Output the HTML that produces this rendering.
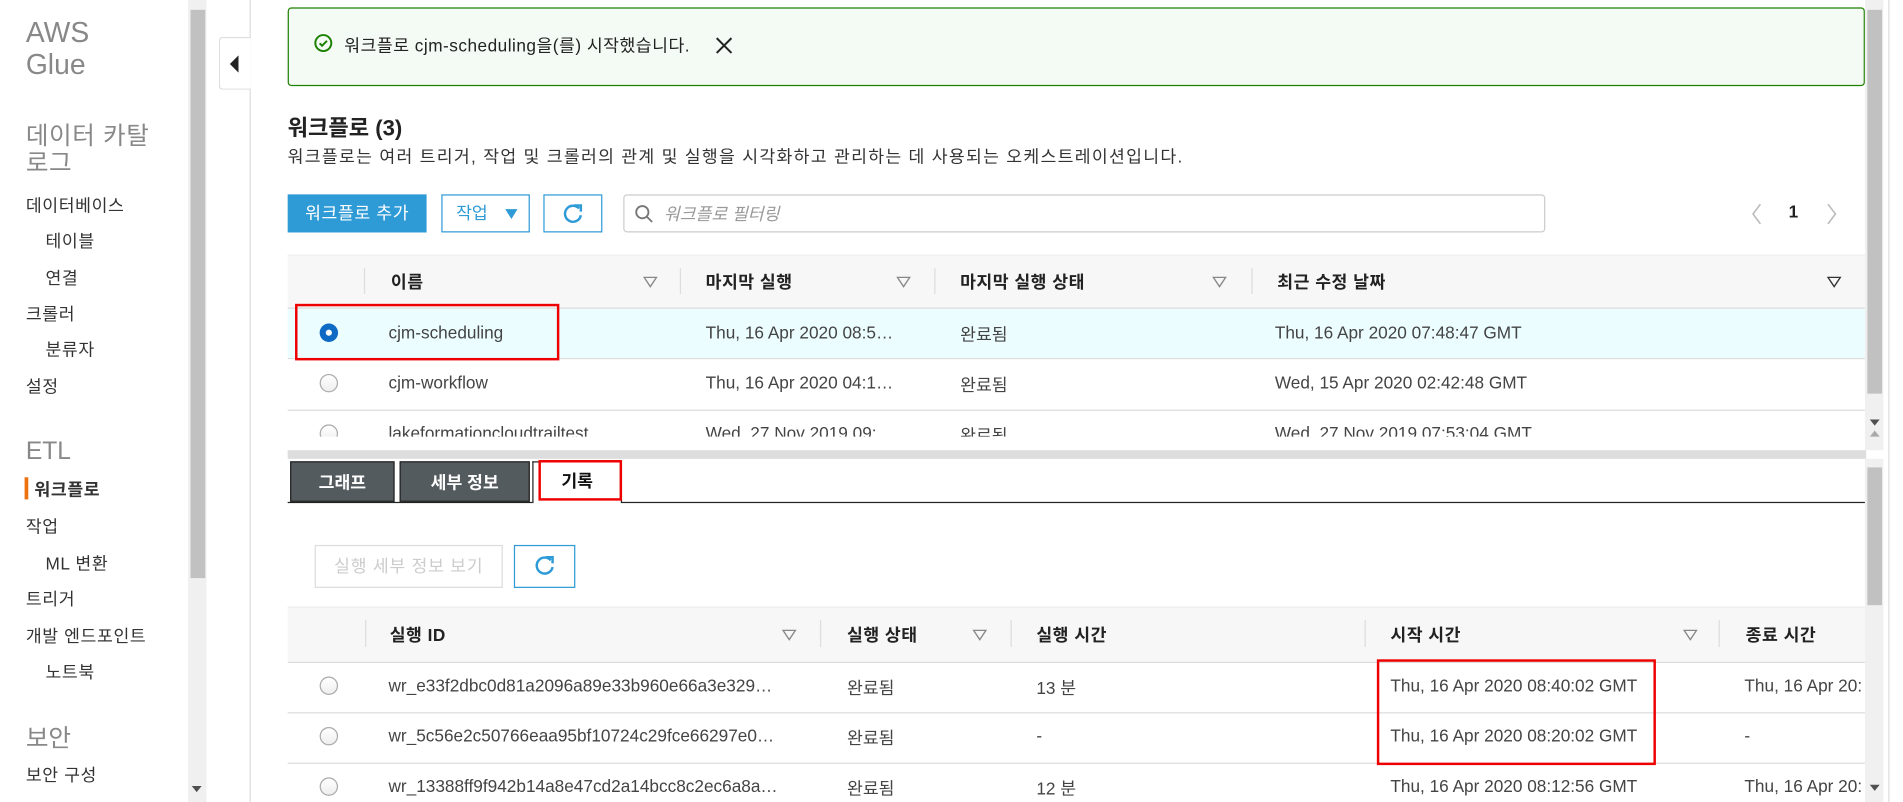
<!DOCTYPE html>
<html><head><meta charset="utf-8"><style>
*{box-sizing:border-box;margin:0;padding:0}
html,body{width:1903px;height:802px;overflow:hidden;background:#fff}
#w{position:absolute;left:0;top:0;width:1548px;height:652px;transform:scale(1.22933,1.23006);transform-origin:0 0;font-family:"Liberation Sans","Noto Sans CJK KR",sans-serif;color:#333}
.a{position:absolute;white-space:nowrap}
.nav{font-size:14px;color:#333;letter-spacing:0.5px}
.g{color:#888;font-size:20px}
.hd{font-size:14px;font-weight:bold;color:#222;letter-spacing:0.4px}
.td{font-size:14px;color:#444}
.tri{position:absolute;width:0;height:0;border-left:6px solid transparent;border-right:6px solid transparent;border-top:9px solid #888}
.tri:after{content:"";position:absolute;left:-4px;top:-8px;border-left:4px solid transparent;border-right:4px solid transparent;border-top:6px solid #f7f7f7}
.rad{position:absolute;width:15px;height:15px;border-radius:50%;border:1px solid #aaa;background:linear-gradient(#fff,#eee)}
.ln{position:absolute;height:1px;background:#ddd}
.sep{position:absolute;width:1px;background:#ddd}
</style></head><body><div id="w">
<div class="a" style="left:21px;top:13px;font-size:23px;line-height:26px;color:#888">AWS<br>Glue</div>
<div class="a g" style="left:21px;top:100px;line-height:22px;letter-spacing:0.5px">데이터 카탈<br>로그</div>
<div class="a nav" style="left:21px;top:157px">데이터베이스</div>
<div class="a nav" style="left:37px;top:186px">테이블</div>
<div class="a nav" style="left:37px;top:216px">연결</div>
<div class="a nav" style="left:21px;top:245px">크롤러</div>
<div class="a nav" style="left:37px;top:274px">분류자</div>
<div class="a nav" style="left:21px;top:304px">설정</div>
<div class="a g" style="left:21px;top:356px">ETL</div>
<div class="a" style="left:20px;top:388px;width:3px;height:18px;background:#ec7211"></div>
<div class="a nav" style="left:28px;top:388px;font-weight:bold">워크플로</div>
<div class="a nav" style="left:21px;top:418px">작업</div>
<div class="a nav" style="left:37px;top:448px">ML 변환</div>
<div class="a nav" style="left:21px;top:477px">트리거</div>
<div class="a nav" style="left:21px;top:507px">개발 엔드포인트</div>
<div class="a nav" style="left:37px;top:536px">노트북</div>
<div class="a g" style="left:21px;top:584px">보안</div>
<div class="a nav" style="left:21px;top:620px">보안 구성</div>
<div class="a" style="left:153px;top:0;width:15px;height:652px;background:#f0f0f0"></div>
<div class="a" style="left:155px;top:8px;width:12px;height:462px;background:#c1c1c1"></div>
<div class="a" style="left:156px;top:639px;border-left:4px solid transparent;border-right:4px solid transparent;border-top:5px solid #505050"></div>
<div class="a" style="left:203px;top:0;width:1px;height:652px;background:#ddd"></div>
<div class="a" style="left:178px;top:30px;width:26px;height:43px;border:1px solid #ddd;border-right:none;background:#fff;border-radius:3px 0 0 3px"></div>
<div class="a" style="left:187px;top:45px;border-top:7px solid transparent;border-bottom:7px solid transparent;border-right:7px solid #222"></div>
<div class="a" style="left:234px;top:6px;width:1283px;height:64px;border:1px solid #1d8102;border-radius:3px;background:#f4fbf4"></div>
<svg class="a" style="left:255px;top:27px" width="16" height="16" viewBox="0 0 16 16"><circle cx="8" cy="8" r="6.5" fill="none" stroke="#1d8102" stroke-width="1.6"/><path d="M5 8.2l2 2 4-4" fill="none" stroke="#1d8102" stroke-width="1.6"/></svg>
<div class="a" style="left:280px;top:27px;font-size:14px;color:#222;letter-spacing:0.4px">워크플로 cjm-scheduling을(를) 시작했습니다.</div>
<svg class="a" style="left:582px;top:30px" width="14" height="14" viewBox="0 0 14 14"><path d="M1 1l12 12M13 1L1 13" stroke="#222" stroke-width="1.6"/></svg>
<div class="a" style="left:234px;top:90px;font-size:18px;font-weight:bold;color:#222">워크플로 (3)</div>
<div class="a" style="left:234px;top:117px;font-size:14px;color:#333;letter-spacing:1.05px">워크플로는 여러 트리거, 작업 및 크롤러의 관계 및 실행을 시각화하고 관리하는 데 사용되는 오케스트레이션입니다.</div>
<div class="a" style="left:234px;top:158px;width:113px;height:31px;background:#2f9bd6;color:#fff;font-size:14px;line-height:31px;text-align:center;letter-spacing:0.5px">워크플로 추가</div>
<div class="a" style="left:359px;top:158px;width:72px;height:31px;border:1px solid #2f9bd6;color:#2f9bd6;font-size:14px;line-height:29px;padding-left:11px">작업</div>
<div class="a" style="left:411px;top:170px;border-left:5px solid transparent;border-right:5px solid transparent;border-top:8px solid #2f9bd6"></div>
<div class="a" style="left:442px;top:158px;width:48px;height:31px;border:1px solid #2f9bd6"></div>
<svg class="a" style="left:456px;top:164px" width="20" height="20" viewBox="0 0 20 20"><path d="M15 5.5A6.5 6.5 0 1 0 16.5 11" fill="none" stroke="#2f9bd6" stroke-width="2"/><path d="M11 3h5.5v5" fill="none" stroke="#2f9bd6" stroke-width="2"/></svg>
<div class="a" style="left:507px;top:158px;width:750px;height:31px;border:1px solid #ccc;border-radius:3px"></div>
<svg class="a" style="left:516px;top:166px" width="16" height="16" viewBox="0 0 16 16"><circle cx="6.5" cy="6.5" r="5" fill="none" stroke="#777" stroke-width="1.5"/><path d="M10 10l4.5 4.5" stroke="#777" stroke-width="1.5"/></svg>
<div class="a" style="left:540px;top:164px;font-size:14px;color:#999;font-style:italic">워크플로 필터링</div>
<svg class="a" style="left:1424px;top:165px" width="10" height="18"><path d="M8 1L2 9l6 8" fill="none" stroke="#bbb" stroke-width="1.3"/></svg>
<div class="a" style="left:1455px;top:164px;font-size:14px;font-weight:bold;color:#222">1</div>
<svg class="a" style="left:1485px;top:165px" width="10" height="18"><path d="M2 1l6 8-6 8" fill="none" stroke="#bbb" stroke-width="1.3"/></svg>
<div class="a" style="left:234px;top:207px;width:1283px;height:43px;background:#f7f7f7;border-top:1px solid #eee"></div>
<div class="sep" style="left:296px;top:218px;height:21px"></div>
<div class="sep" style="left:553px;top:218px;height:21px"></div>
<div class="sep" style="left:760px;top:218px;height:21px"></div>
<div class="sep" style="left:1018px;top:218px;height:21px"></div>
<div class="a hd" style="left:318px;top:219px">이름</div>
<div class="a hd" style="left:574px;top:219px">마지막 실행</div>
<div class="a hd" style="left:781px;top:219px">마지막 실행 상태</div>
<div class="a hd" style="left:1039px;top:219px">최근 수정 날짜</div>
<div class="tri" style="left:523px;top:225px"></div>
<div class="tri" style="left:729px;top:225px"></div>
<div class="tri" style="left:986px;top:225px"></div>
<div class="tri" style="left:1486px;top:225px;border-top-color:#333"></div>
<div class="a" style="left:234px;top:250px;width:1283px;height:41px;background:#ebfdff"></div>
<div class="ln" style="left:234px;top:250px;width:1283px"></div>
<div class="ln" style="left:234px;top:291px;width:1283px"></div>
<div class="ln" style="left:234px;top:333px;width:1283px"></div>
<div class="a" style="left:260px;top:263px;width:15px;height:15px;border-radius:50%;background:#0e6ac4"></div>
<div class="a" style="left:265px;top:268px;width:5px;height:5px;border-radius:50%;background:#fff"></div>
<div class="a td" style="left:316px;top:262px">cjm-scheduling</div>
<div class="a td" style="left:574px;top:262px">Thu, 16 Apr 2020 08:5…</div>
<div class="a td" style="left:781px;top:262px">완료됨</div>
<div class="a td" style="left:1037px;top:262px">Thu, 16 Apr 2020 07:48:47 GMT</div>
<div class="rad" style="left:260px;top:304px"></div>
<div class="a td" style="left:316px;top:303px">cjm-workflow</div>
<div class="a td" style="left:574px;top:303px">Thu, 16 Apr 2020 04:1…</div>
<div class="a td" style="left:781px;top:303px">완료됨</div>
<div class="a td" style="left:1037px;top:303px">Wed, 15 Apr 2020 02:42:48 GMT</div>
<div class="a" style="left:234px;top:334px;width:1283px;height:21px;overflow:hidden">
<div class="rad" style="left:26px;top:11px"></div>
<div class="a td" style="left:82px;top:10px">lakeformationcloudtrailtest</div>
<div class="a td" style="left:340px;top:10px">Wed, 27 Nov 2019 09:</div>
<div class="a td" style="left:547px;top:10px">완료됨</div>
<div class="a td" style="left:803px;top:10px">Wed, 27 Nov 2019 07:53:04 GMT</div></div>
<div class="a" style="left:240px;top:247px;width:215px;height:46px;border:2px solid #e00"></div>
<div class="a" style="left:1517px;top:0;width:15px;height:366px;background:#f0f0f0"></div>
<div class="a" style="left:1519px;top:8px;width:12px;height:312px;background:#c1c1c1"></div>
<div class="a" style="left:1521px;top:341px;border-left:4px solid transparent;border-right:4px solid transparent;border-top:5px solid #505050"></div>
<div class="a" style="left:1517px;top:373px;width:15px;height:279px;background:#f0f0f0"></div>
<div class="a" style="left:1521px;top:350px;border-left:4px solid transparent;border-right:4px solid transparent;border-bottom:5px solid #aaa"></div>
<div class="a" style="left:1519px;top:380px;width:12px;height:112px;background:#c1c1c1"></div>
<div class="a" style="left:1521px;top:638px;border-left:4px solid transparent;border-right:4px solid transparent;border-top:5px solid #505050"></div>
<div class="a" style="left:1536px;top:0;width:1px;height:652px;background:#ddd"></div>
<div class="a" style="left:234px;top:366px;width:1284px;height:7px;background:#ddd"></div>
<div class="a" style="left:236px;top:375px;width:85px;height:33px;background:#545b5e;color:#fff;font-size:14px;font-weight:bold;text-align:center;line-height:33px;border:1px solid #222">그래프</div>
<div class="a" style="left:325px;top:375px;width:106px;height:33px;background:#545b5e;color:#fff;font-size:14px;font-weight:bold;text-align:center;line-height:33px;border:1px solid #222">세부 정보</div>
<div class="a" style="left:433px;top:375px;width:73px;height:34px;background:#fff;color:#111;font-size:14px;font-weight:bold;text-align:center;line-height:31px;border:1px solid #222;border-bottom:none">기록</div>
<div class="a" style="left:234px;top:408px;width:199px;height:1px;background:#222"></div>
<div class="a" style="left:506px;top:408px;width:1011px;height:1px;background:#222"></div>
<div class="a" style="left:438px;top:374px;width:68px;height:33px;border:2px solid #e00"></div>
<div class="a" style="left:256px;top:443px;width:153px;height:35px;border:1px solid #ddd;color:#ccc;font-size:14px;line-height:33px;text-align:center;letter-spacing:0.6px">실행 세부 정보 보기</div>
<div class="a" style="left:418px;top:443px;width:50px;height:35px;border:1px solid #2f9bd6"></div>
<svg class="a" style="left:433px;top:450px" width="20" height="20" viewBox="0 0 20 20"><path d="M15 5.5A6.5 6.5 0 1 0 16.5 11" fill="none" stroke="#2f9bd6" stroke-width="2"/><path d="M11 3h5.5v5" fill="none" stroke="#2f9bd6" stroke-width="2"/></svg>
<div class="a" style="left:234px;top:493px;width:1283px;height:45px;background:#f7f7f7;border-top:1px solid #eee"></div>
<div class="sep" style="left:297px;top:504px;height:22px"></div>
<div class="sep" style="left:667px;top:504px;height:22px"></div>
<div class="sep" style="left:822px;top:504px;height:22px"></div>
<div class="sep" style="left:1110px;top:504px;height:22px"></div>
<div class="sep" style="left:1398px;top:504px;height:22px"></div>
<div class="a hd" style="left:317px;top:506px">실행 ID</div>
<div class="a hd" style="left:689px;top:506px">실행 상태</div>
<div class="a hd" style="left:843px;top:506px">실행 시간</div>
<div class="a hd" style="left:1131px;top:506px">시작 시간</div>
<div class="a hd" style="left:1420px;top:506px">종료 시간</div>
<div class="tri" style="left:636px;top:512px"></div>
<div class="tri" style="left:791px;top:512px"></div>
<div class="tri" style="left:1369px;top:512px"></div>
<div class="ln" style="left:234px;top:538px;width:1283px"></div>
<div class="ln" style="left:234px;top:579px;width:1283px"></div>
<div class="ln" style="left:234px;top:620px;width:1283px"></div>
<div class="a" style="left:234px;top:538px;width:1283px;height:114px;overflow:hidden">
<div class="rad" style="left:26px;top:12px"></div>
<div class="a td" style="left:82px;top:11px">wr_e33f2dbc0d81a2096a89e33b960e66a3e329…</div>
<div class="a td" style="left:455px;top:11px">완료됨</div>
<div class="a td" style="left:609px;top:11px">13 분</div>
<div class="a td" style="left:897px;top:11px">Thu, 16 Apr 2020 08:40:02 GMT</div>
<div class="a td" style="left:1185px;top:11px">Thu, 16 Apr 20:</div>
<div class="rad" style="left:26px;top:53px"></div>
<div class="a td" style="left:82px;top:52px">wr_5c56e2c50766eaa95bf10724c29fce66297e0…</div>
<div class="a td" style="left:455px;top:52px">완료됨</div>
<div class="a td" style="left:609px;top:52px">-</div>
<div class="a td" style="left:897px;top:52px">Thu, 16 Apr 2020 08:20:02 GMT</div>
<div class="a td" style="left:1185px;top:52px">-</div>
<div class="rad" style="left:26px;top:94px"></div>
<div class="a td" style="left:82px;top:93px">wr_13388ff9f942b14a8e47cd2a14bcc8c2ec6a8a…</div>
<div class="a td" style="left:455px;top:93px">완료됨</div>
<div class="a td" style="left:609px;top:93px">12 분</div>
<div class="a td" style="left:897px;top:93px">Thu, 16 Apr 2020 08:12:56 GMT</div>
<div class="a td" style="left:1185px;top:93px">Thu, 16 Apr 20:</div>
</div>
<div class="a" style="left:1120px;top:536px;width:227px;height:86px;border:2px solid #e00"></div>
</div></body></html>
